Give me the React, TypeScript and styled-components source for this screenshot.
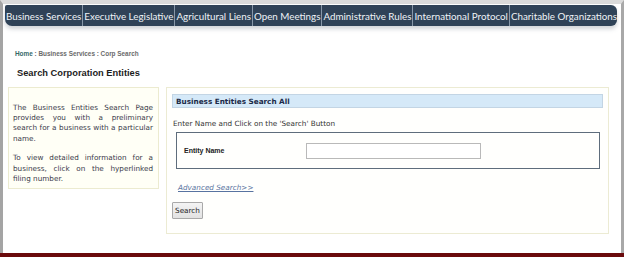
import React from "react";
import styled, { createGlobalStyle } from "styled-components";

const Global = createGlobalStyle`
  html, body { margin: 0; padding: 0; background: #ffffff; }
  body { width: 624px; height: 257px; overflow: hidden; }
`;

const Frame = styled.div`
  width: 624px;
  height: 257px;
  display: flex;
  flex-direction: column;
  box-sizing: border-box;
`;

const Window = styled.div`
  flex: 1;
  display: flex;
  flex-direction: column;
  border-top: 4px solid #dadada;
  border-left: 3px solid #a4a4a4;
  border-right: 3px solid #a8a8a8;
  background: #ffffff;
  box-sizing: border-box;
  padding: 1px 4px 0 2px;
`;

const Nav = styled.nav`
  display: flex;
  height: 21px;
  background: #2f4257;
  border-radius: 2px 6px 6px 7px;
  box-shadow: 0 3px 4px rgba(120, 130, 140, 0.35);
  overflow: hidden;
`;

const NavItem = styled.a<{ $first?: boolean }>`
  flex: 1 1 auto;
  display: flex;
  align-items: center;
  justify-content: center;
  padding: 0 1px;
  font-family: Lato, "Open Sans", sans-serif;
  font-size: 9.8px;
  color: #eef2f6;
  white-space: nowrap;
  border-left: ${(p) => (p.$first ? "none" : "1px solid #8797a8")};
  text-decoration: none;
`;

const Content = styled.div`
  display: flex;
  flex-direction: column;
  padding: 24px 0 0 3px;
`;

const Crumbs = styled.div`
  font-family: "Liberation Sans", Arial, sans-serif;
  font-weight: bold;
  font-size: 6.4px;
  color: #6a6a6a;
  padding-left: 7px;
  line-height: 8px;
`;

const CrumbLink = styled.span`
  color: #356868;
`;

const Title = styled.h1`
  margin: 10px 0 0 9px;
  font-family: "Liberation Sans", Arial, sans-serif;
  font-weight: bold;
  font-size: 9.3px;
  line-height: 11px;
  color: #1c1c1c;
`;

const Columns = styled.div`
  display: flex;
  align-items: flex-start;
  gap: 7px;
  margin-top: 8px;
`;

const InfoBox = styled.div`
  width: 151px;
  height: 102px;
  box-sizing: border-box;
  border: 1px solid #ecebd0;
  background: #fffff6;
  padding: 15px 5px 0 4px;
  font-family: "DejaVu Sans", Verdana, sans-serif;
  font-size: 7.25px;
  line-height: 10.2px;
  color: #3a3a4a;
  text-align: justify;
`;

const InfoPara = styled.p`
  margin: 0 0 9.5px 0;
`;

const SearchBox = styled.div`
  width: 443px;
  height: 147px;
  box-sizing: border-box;
  border: 1px solid #ecebd3;
  background: #fffffd;
  padding: 6px 5px 0 5px;
  display: flex;
  flex-direction: column;
  font-family: "DejaVu Sans", Verdana, sans-serif;
  font-size: 7.25px;
  color: #333;
`;

const BoxHeader = styled.div`
  height: 14px;
  box-sizing: border-box;
  background: #d5e9f8;
  border: 1px solid #c3d5e4;
  padding-left: 3px;
  display: flex;
  align-items: center;
  font-weight: bold;
  color: #1b2a48;
`;

const Hint = styled.div`
  margin-top: 11px;
  padding-left: 1px;
  line-height: 9px;
`;

const FieldPanel = styled.div`
  margin: 4px 3px 0 4px;
  height: 37px;
  box-sizing: border-box;
  border: 1.5px solid #5e6d7c;
  display: flex;
  align-items: center;
  padding-left: 7px;
`;

const FieldLabel = styled.label`
  width: 122px;
  font-family: "Liberation Sans", Arial, sans-serif;
  font-weight: bold;
  font-size: 7px;
  color: #222;
`;

const TextInput = styled.input`
  width: 175px;
  height: 16px;
  box-sizing: border-box;
  border: 1px solid #b9b9b9;
  background: #fff;
  margin: 0;
  padding: 0;
`;

const AdvLink = styled.a`
  margin: 14px 0 0 6px;
  font-style: italic;
  color: #5873a0;
  text-decoration: underline;
  line-height: 9px;
  align-self: flex-start;
`;

const Button = styled.button`
  margin-top: 10px;
  align-self: flex-start;
  width: 31px;
  height: 17px;
  box-sizing: border-box;
  padding: 0;
  border: 1px solid #a9a9a9;
  border-radius: 1px;
  background: linear-gradient(#f4f4f4, #e2e2e2);
  font-family: "DejaVu Sans", Verdana, sans-serif;
  font-size: 7.25px;
  color: #222;
`;

const Footer = styled.div`
  height: 4px;
  background: #6a0a0c;
`;

const navItems = [
  "Business Services",
  "Executive Legislative",
  "Agricultural Liens",
  "Open Meetings",
  "Administrative Rules",
  "International Protocol",
  "Charitable Organizations",
];

export default function App() {
  return (
    <>
      <Global />
      <Frame>
        <Window>
          <Nav>
            {navItems.map((n, i) => (
              <NavItem key={n} $first={i === 0}>
                {n}
              </NavItem>
            ))}
          </Nav>
          <Content>
            <Crumbs>
              <CrumbLink>Home</CrumbLink> : Business Services : Corp Search
            </Crumbs>
            <Title>Search Corporation Entities</Title>
            <Columns>
              <InfoBox>
                <InfoPara>
                  The Business Entities Search Page provides you with a
                  preliminary search for a business with a particular name.
                </InfoPara>
                <InfoPara>
                  To view detailed information for a business, click on the
                  hyperlinked filing number.
                </InfoPara>
              </InfoBox>
              <SearchBox>
                <BoxHeader>Business Entities Search All</BoxHeader>
                <Hint>Enter Name and Click on the 'Search' Button</Hint>
                <FieldPanel>
                  <FieldLabel>Entity Name</FieldLabel>
                  <TextInput type="text" />
                </FieldPanel>
                <AdvLink>Advanced Search&gt;&gt;</AdvLink>
                <Button>Search</Button>
              </SearchBox>
            </Columns>
          </Content>
        </Window>
        <Footer />
      </Frame>
    </>
  );
}
